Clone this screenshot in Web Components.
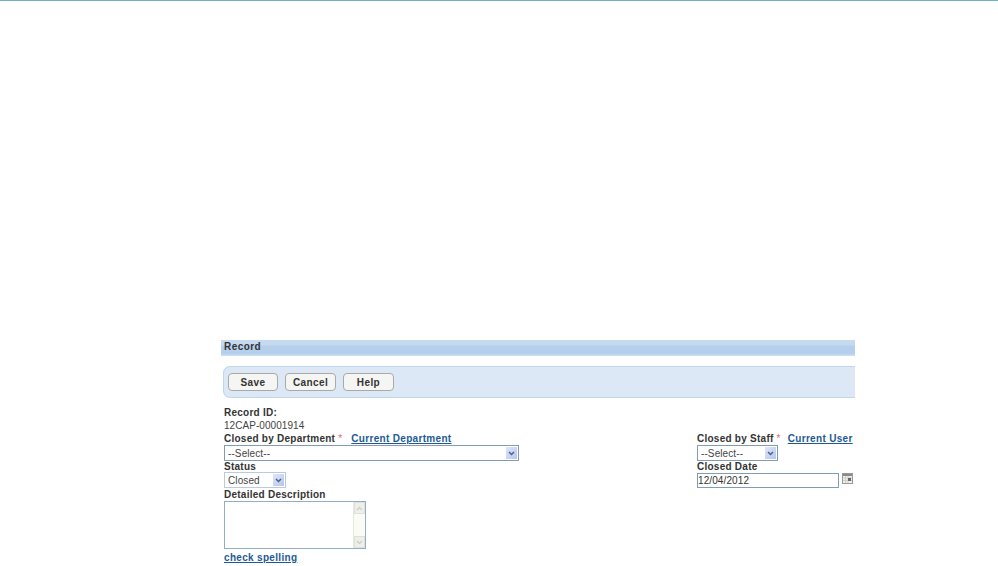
<!DOCTYPE html>
<html>
<head>
<meta charset="utf-8">
<title>Record</title>
<style>
html, body { margin: 0; background: #fff; overflow: hidden; }
body { font: 10px "Liberation Sans", Arial, sans-serif; color: #333; }
</style>
</head>
<body>
<record-page>
  <section-bar>Record</section-bar>
  <tool-bar>
    <tool-button style="width:50px">Save</tool-button>
    <tool-button>Cancel</tool-button>
    <tool-button>Help</tool-button>
  </tool-bar>
  <record-form></record-form>
</record-page>

<script>
class RecordPage extends HTMLElement {
  constructor() {
    super();
    this.attachShadow( {mode: 'open'} ).innerHTML = `
    <style>
    :host {
      border-top: 1px solid #6fb2ca;
      display: block;
      height: 565px;
      overflow: hidden;
    }
    div {
      margin-left: 221px;
      padding-top: 339px;
      width: 634px;
    }
    </style>
    <div><slot></slot></div>
    `;
  }
}

class SectionBar extends HTMLElement {
  constructor() {
    super();
    this.attachShadow( {mode: 'open'} ).innerHTML = `
    <style>
    :host {
      background: linear-gradient( #c5daef 0, #c5daef 5px, #b5d0ec 6px, #b5d0ec 14px, #c9dcf0 15px );
      box-sizing: border-box;
      color: #333;
      display: block;
      font-size: 10px;
      font-weight: bold;
      height: 16px;
      letter-spacing: .45px;
      line-height: 13px;
      padding-left: 3px;
    }
    </style>
    <slot></slot>
    `;
  }
}

class ToolBar extends HTMLElement {
  constructor() {
    super();
    this.attachShadow( {mode: 'open'} ).innerHTML = `
    <style>
    :host {
      background: #dce8f5;
      border: solid #c0d6ec;
      border-radius: 7px 0 0 7px;
      border-width: 1px 0 1px 1px;
      box-sizing: border-box;
      display: flex;
      gap: 7px;
      height: 32px;
      margin: 10px 0 0 2px;
      padding: 6px 0 0 4px;
    }
    </style>
    <slot></slot>
    `;
  }
}

class ToolButton extends HTMLElement {
  constructor() {
    super();
    this.attachShadow( {mode: 'open'} ).innerHTML = `
    <style>
    :host {
      background: #f5f5f3;
      border: 1px solid #a9a9a5;
      border-radius: 4px;
      box-sizing: border-box;
      color: #333;
      display: block;
      font-size: 10px;
      font-weight: bold;
      height: 18px;
      letter-spacing: .4px;
      line-height: 17px;
      text-align: center;
      width: 51px;
    }
    </style>
    <slot></slot>
    `;
  }
}

class FieldLabel extends HTMLElement {
  constructor() {
    super();
    this.attachShadow( {mode: 'open'} ).innerHTML = `
    <style>
    :host {
      color: #333;
      display: flex;
      font-size: 10px;
      font-weight: bold;
      height: 12px;
      letter-spacing: .25px;
      line-height: 12px;
      white-space: nowrap;
    }
    i {
      color: #e66;
      font-style: normal;
      font-weight: normal;
      margin-left: 3px;
    }
    ::slotted( a ) {
      color: #1d5a94;
      margin-left: 7px;
    }
    </style>
    <span><slot name="text"></slot></span>
    <i hidden>*</i>
    <slot></slot>
    `;
    if( this.hasAttribute( 'required' ) ) {
      this.shadowRoot.querySelector( 'i' ).hidden = false;
    }
  }
}

class DropSelect extends HTMLElement {
  constructor() {
    super();
    this.attachShadow( {mode: 'open'} ).innerHTML = `
    <style>
    :host {
      background: #fff;
      border: 1px solid #7f9db9;
      box-sizing: border-box;
      color: #444;
      display: flex;
      font-size: 10px;
      height: 16px;
      justify-content: space-between;
      letter-spacing: .1px;
      line-height: 16px;
      padding-left: 2px;
    }
    b {
      background: linear-gradient( 135deg, #dfe6f8, #b4c6ef );
      border: 1px solid #fff;
      box-sizing: border-box;
      display: block;
      height: 14px;
      width: 13px;
    }
    svg {
      display: block;
      margin: 4px 0 0 2px;
    }
    </style>
    <span style="padding-left:1px"><slot></slot></span>
    <b><svg width="7" height="5" viewBox="0 0 7 5"><path d="M1 1 L3.5 3.5 L6 1" fill="none" stroke="#4d6185" stroke-width="1.5"/></svg></b>
    `;
  }
}

class DateField extends HTMLElement {
  constructor() {
    super();
    this.attachShadow( {mode: 'open'} ).innerHTML = `
    <style>
    :host {
      align-items: flex-start;
      display: flex;
      gap: 3px;
      padding-top: 1px;
    }
    div {
      border: 1px solid #7f9db9;
      box-sizing: border-box;
      color: #333;
      font-size: 10px;
      height: 15px;
      letter-spacing: .1px;
      line-height: 14px;
      width: 142px;
    }
    svg {
      display: block;
    }
    </style>
    <div><slot></slot></div>
    <svg width="11" height="11" viewBox="0 0 11 11">
      <rect x=".5" y=".5" width="10" height="10" fill="#f0f0ee" stroke="#9a9a96"/>
      <rect x="1" y="1" width="9" height="2" fill="#8a8a86"/>
      <path d="M1 5h9M1 7.5h9M3.5 3v7M6 3v7" stroke="#cfcfcb"/>
      <rect x="6" y="5" width="3" height="3" fill="#666"/>
    </svg>
    `;
  }
}

class MemoBox extends HTMLElement {
  constructor() {
    super();
    this.attachShadow( {mode: 'open'} ).innerHTML = `
    <style>
    :host {
      background: #fff;
      border: 1px solid #94adc6;
      box-sizing: border-box;
      display: flex;
      height: 48px;
      justify-content: flex-end;
      width: 142px;
    }
    div {
      background: #fbfbf5;
      border-left: 1px solid #e8e8e0;
      display: flex;
      flex-direction: column;
      justify-content: space-between;
      width: 11px;
    }
    b {
      background: #efefe9;
      border: 1px solid #e0e0da;
      box-sizing: border-box;
      display: block;
      height: 12px;
    }
    svg {
      display: block;
      margin: 3px 0 0 1px;
    }
    </style>
    <div>
      <b><svg width="7" height="5" viewBox="0 0 7 5"><path d="M1 4 L3.5 1.5 L6 4" fill="none" stroke="#cfcfc8" stroke-width="1.4"/></svg></b>
      <b><svg width="7" height="5" viewBox="0 0 7 5"><path d="M1 1 L3.5 3.5 L6 1" fill="none" stroke="#cfcfc8" stroke-width="1.4"/></svg></b>
    </div>
    `;
  }
}

class RecordForm extends HTMLElement {
  constructor() {
    super();
    this.attachShadow( {mode: 'open'} ).innerHTML = `
    <style>
    :host {
      display: grid;
      font-size: 10px;
      grid-template-columns: 473px 1fr;
      margin: 9px 0 0 3px;
    }
    section {
      display: flex;
      flex-direction: column;
      align-items: flex-start;
    }
    .top { height: 26px; }
    .top p {
      color: #444;
      font-size: 10px;
      height: 12px;
      letter-spacing: .06px;
      line-height: 12px;
      margin: 0;
    }
    .top field-label { height: 13px; }
    .right { grid-column: 2; grid-row: 1; padding-top: 26px; }
    a {
      color: #1d5a94;
      font-weight: bold;
      letter-spacing: .32px;
    }
    .short { height: 11px; line-height: 11px; }
    .tall { height: 13px; line-height: 13px; }
    .check {
      display: block;
      line-height: 12px;
      margin: 3px 0 0;
    }
    </style>
    <section>
      <div class="top">
        <field-label><span slot="text">Record ID:</span></field-label>
        <p>12CAP-00001914</p>
      </div>
      <field-label required><span slot="text">Closed by Department</span><a href="#" style="margin-left:9px">Current Department</a></field-label>
      <drop-select style="width:295px">--Select--</drop-select>
      <field-label class="short"><span slot="text">Status</span></field-label>
      <drop-select style="width:62px;border-color:#b9cbe0">Closed</drop-select>
      <field-label class="tall"><span slot="text">Detailed Description</span></field-label>
      <memo-box></memo-box>
      <a class="check" href="#">check spelling</a>
    </section>
    <section class="right">
      <field-label required><span slot="text">Closed by Staff</span><a href="#">Current User</a></field-label>
      <drop-select style="width:81px">--Select--</drop-select>
      <field-label class="short"><span slot="text">Closed Date</span></field-label>
      <date-field>12/04/2012</date-field>
    </section>
    `;
  }
}

window.customElements.define( 'record-page', RecordPage );
window.customElements.define( 'section-bar', SectionBar );
window.customElements.define( 'tool-bar', ToolBar );
window.customElements.define( 'tool-button', ToolButton );
window.customElements.define( 'field-label', FieldLabel );
window.customElements.define( 'drop-select', DropSelect );
window.customElements.define( 'date-field', DateField );
window.customElements.define( 'memo-box', MemoBox );
window.customElements.define( 'record-form', RecordForm );
</script>
</body>
</html>
